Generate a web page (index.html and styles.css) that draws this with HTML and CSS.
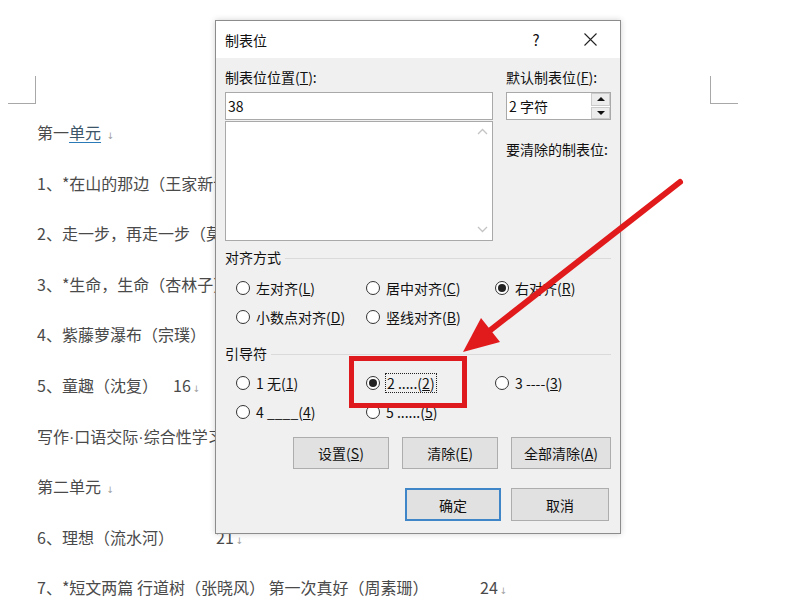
FILE: index.html
```html
<!DOCTYPE html>
<html lang="zh-CN">
<head>
    <meta charset="UTF-8">
    <title>制表位</title>
    <link rel="stylesheet" href="styles.css">
</head>
<body>
    <div class="page">
        <div class="marks">
            <div class="mark mark-left"></div>
            <div class="mark mark-right"></div>
        </div>

        <div class="doc">
            <p class="line">第一<span class="spell">单元</span> <span class="pm">↓</span></p>
            <p class="line">1、*在山的那边（王家新诗）</p>
            <p class="line">2、走一步，再走一步（莫顿·亨特）</p>
            <p class="line">3、*生命，生命（杏林子）</p>
            <p class="line">4、紫藤萝瀑布（宗璞）</p>
            <p class="line"><span class="tab tab-a">5、童趣（沈复）</span>16<span class="pm">↓</span></p>
            <p class="line">写作<span class="mid">·</span>口语交际<span class="mid">·</span>综合性学习</p>
            <p class="line">第二单元 <span class="pm">↓</span></p>
            <p class="line"><span class="tab tab-b">6、理想（流水河）</span>21<span class="pm">↓</span></p>
            <p class="line"><span class="tab tab-c">7、*短文两篇 行道树（张晓风） 第一次真好（周素珊）</span>24<span class="pm">↓</span></p>
        </div>

        <div class="dialog">
            <div class="titlebar">
                <span class="title">制表位</span>
                <span class="help">?</span>
                <svg class="close" width="13" height="13" viewBox="0 0 13 13">
                    <path d="M0.5 0.5 L12.5 12.5 M12.5 0.5 L0.5 12.5" stroke="#222" stroke-width="1.1" fill="none"/>
                </svg>
            </div>

            <div class="dlg-body">
                <div class="top">
                    <div class="col">
                        <div class="lbl">制表位位置(<u>T</u>):</div>
                        <div class="input">38</div>
                        <div class="listbox">
                            <div class="scroll">
                                <svg width="11" height="7" viewBox="0 0 11 7"><path d="M1 6 L5.5 1.5 L10 6" stroke="#c4c4c4" stroke-width="1.3" fill="none"/></svg>
                                <svg width="11" height="7" viewBox="0 0 11 7"><path d="M1 1 L5.5 5.5 L10 1" stroke="#c4c4c4" stroke-width="1.3" fill="none"/></svg>
                            </div>
                        </div>
                    </div>
                    <div class="col">
                        <div class="lbl">默认制表位(<u>F</u>):</div>
                        <div class="spin">
                            <span class="spin-val">2 字符</span>
                            <div class="spin-btns">
                                <div class="spin-btn"><span class="tri-up"></span></div>
                                <div class="spin-btn"><span class="tri-down"></span></div>
                            </div>
                        </div>
                        <div class="lbl clear-lbl">要清除的制表位:</div>
                    </div>
                </div>

                <div class="group-title">对齐方式</div>
                <div class="radios">
                    <div class="radio"><span class="dot"></span>左对齐(<u>L</u>)</div>
                    <div class="radio"><span class="dot"></span>居中对齐(<u>C</u>)</div>
                    <div class="radio on"><span class="dot"></span>右对齐(<u>R</u>)</div>
                    <div class="radio"><span class="dot"></span>小数点对齐(<u>D</u>)</div>
                    <div class="radio"><span class="dot"></span>竖线对齐(<u>B</u>)</div>
                </div>

                <div class="group-title second">引导符</div>
                <div class="radios leaders">
                    <div class="radio"><span class="dot"></span>1 无(<u>1</u>)</div>
                    <div class="radio on"><span class="dot"></span><span class="focus">2 .....(<u>2</u>)</span></div>
                    <div class="radio"><span class="dot"></span>3 ----(<u>3</u>)</div>
                    <div class="radio"><span class="dot"></span>4 ____(<u>4</u>)</div>
                    <div class="radio"><span class="dot"></span>5 ......(<u>5</u>)</div>
                </div>

                <div class="btn-row">
                    <div class="btn">设置(<u>S</u>)</div>
                    <div class="btn">清除(<u>E</u>)</div>
                    <div class="btn wide">全部清除(<u>A</u>)</div>
                </div>
                <div class="btn-row bottom">
                    <div class="btn default">确定</div>
                    <div class="btn cancel">取消</div>
                </div>
            </div>
        </div>

        <div class="highlight"></div>
        <svg class="arrow" width="800" height="600" viewBox="0 0 800 600">
            <line x1="680" y1="182" x2="488" y2="332" stroke="#e11a1c" stroke-width="6" stroke-linecap="round"/>
            <polygon points="463,352 500,342 481,318" fill="#e11a1c"/>
        </svg>
    </div>
</body>
</html>
```

FILE: styles.css
```css
* {
    margin: 0;
    padding: 0;
    box-sizing: border-box;
}

body {
    background: #fff;
    font-family: "Noto Sans CJK SC", "Noto Sans", sans-serif;
}

.page {
    position: relative;
    width: 800px;
    height: 600px;
    overflow: hidden;
    background: #fff;
}

/* page corner marks */
.marks {
    display: flex;
    padding-top: 76px;
}

.mark {
    width: 28px;
    height: 28px;
    border-bottom: 1px solid #a8a8a8;
}

.mark-left {
    margin-left: 8px;
    border-right: 1px solid #a8a8a8;
}

.mark-right {
    margin-left: auto;
    margin-right: 62px;
    border-left: 1px solid #a8a8a8;
}

/* document text */
.doc {
    padding: 3px 0 0 37px;
}

.line {
    height: 50.6px;
    line-height: 50.6px;
    font-size: 16px;
    color: #4a4a4a;
    white-space: nowrap;
}

.spell {
    text-decoration: underline;
    text-decoration-color: #2a7ab8;
    text-underline-offset: 3px;
    color: #3c5568;
}

.pm {
    font-family: "DejaVu Sans", sans-serif;
    font-size: 9px;
    color: #a0a0a0;
    margin-left: 2px;
}

.mid {
    font-family: "Liberation Sans", sans-serif;
}

.tab {
    display: inline-block;
}

.tab-a { width: 136px; }
.tab-b { width: 179px; }
.tab-c { width: 443px; }

/* dialog */
.dialog {
    position: absolute;
    left: 215px;
    top: 20px;
    width: 406px;
    background: #f0f0f0;
    border: 1px solid #8c8c8c;
    box-shadow: 0 0 6px rgba(0, 0, 0, 0.18);
    font-size: 14px;
    color: #111;
}

.titlebar {
    height: 37px;
    background: #fff;
    display: flex;
    align-items: center;
    padding-left: 9px;
}

.title {
    font-size: 14px;
}

.help {
    margin-left: auto;
    width: 12px;
    text-align: center;
    font-size: 15px;
}

.close {
    margin-left: 42px;
    margin-right: 23px;
}

.dlg-body {
    padding: 9px 9px 12px 9px;
}

.top {
    display: grid;
    grid-template-columns: 268px 1fr;
    column-gap: 13px;
}

.lbl {
    height: 20px;
    line-height: 20px;
    white-space: nowrap;
}

.input {
    margin-top: 5px;
    height: 28px;
    line-height: 26px;
    padding-left: 2px;
    background: #fff;
    border: 1px solid #a9a9a9;
}

.listbox {
    margin-top: 1px;
    height: 120px;
    background: #fff;
    border: 1px solid #a9a9a9;
    display: flex;
    justify-content: flex-end;
}

.scroll {
    width: 19px;
    display: flex;
    flex-direction: column;
    justify-content: space-between;
    align-items: center;
    padding: 6px 0 7px;
}

.spin {
    margin-top: 5px;
    height: 28px;
    background: #fff;
    border: 1px solid #a9a9a9;
    display: flex;
    align-items: center;
}

.spin-val {
    padding-left: 2px;
}

.spin-btns {
    margin-left: auto;
    width: 19px;
    height: 100%;
    display: flex;
    flex-direction: column;
    gap: 1px;
}

.spin-btn {
    flex: 1;
    background: #ececec;
    border: 1px solid #cbcbcb;
    display: flex;
    align-items: center;
    justify-content: center;
}

.tri-up {
    border-left: 4px solid transparent;
    border-right: 4px solid transparent;
    border-bottom: 4px solid #111;
}

.tri-down {
    border-left: 4px solid transparent;
    border-right: 4px solid transparent;
    border-top: 4px solid #111;
}

.clear-lbl {
    margin-top: 19px;
}

.group-title {
    margin-top: 6px;
    height: 20px;
    line-height: 20px;
    display: flex;
    align-items: center;
    gap: 4px;
}

.group-title::after {
    content: "";
    flex: 1;
    height: 1px;
    background: #dadada;
    margin-top: 2px;
}

.group-title.second {
    margin-top: 12px;
}

.radios {
    margin-top: 6px;
    padding-left: 11px;
    display: grid;
    grid-template-columns: 130px 129px 1fr;
    grid-auto-rows: 29px;
}

.radios.leaders {
    margin-top: 5px;
}

.radio {
    display: flex;
    align-items: center;
    white-space: nowrap;
}

.dot {
    width: 14px;
    height: 14px;
    border: 1px solid #333;
    border-radius: 50%;
    background: #fff;
    margin-right: 6px;
    display: flex;
    align-items: center;
    justify-content: center;
    flex-shrink: 0;
}

.radio.on .dot::after {
    content: "";
    width: 8px;
    height: 8px;
    border-radius: 50%;
    background: #222;
}

.focus {
    outline: 1px dotted #222;
    outline-offset: 0;
    padding: 0 1px;
    line-height: 18px;
}

.btn-row {
    margin-top: 11px;
    display: flex;
    justify-content: flex-end;
    gap: 13px;
}

.btn-row.bottom {
    margin-top: 19px;
    gap: 10px;
    padding-right: 2px;
}

.btn {
    width: 96px;
    height: 32px;
    background: #e1e1e1;
    border: 1px solid #adadad;
    display: flex;
    align-items: center;
    justify-content: center;
}

.btn.wide {
    width: 100px;
}

.btn-row.bottom .btn {
    height: 33px;
}

.btn.default {
    border: 2px solid #3f86c8;
}

.btn.cancel {
    width: 98px;
}

/* annotation overlays */
.highlight {
    position: absolute;
    left: 349px;
    top: 356px;
    width: 118px;
    height: 52px;
    border: 5px solid #de1a1f;
}

.arrow {
    position: absolute;
    left: 0;
    top: 0;
    pointer-events: none;
}
```
